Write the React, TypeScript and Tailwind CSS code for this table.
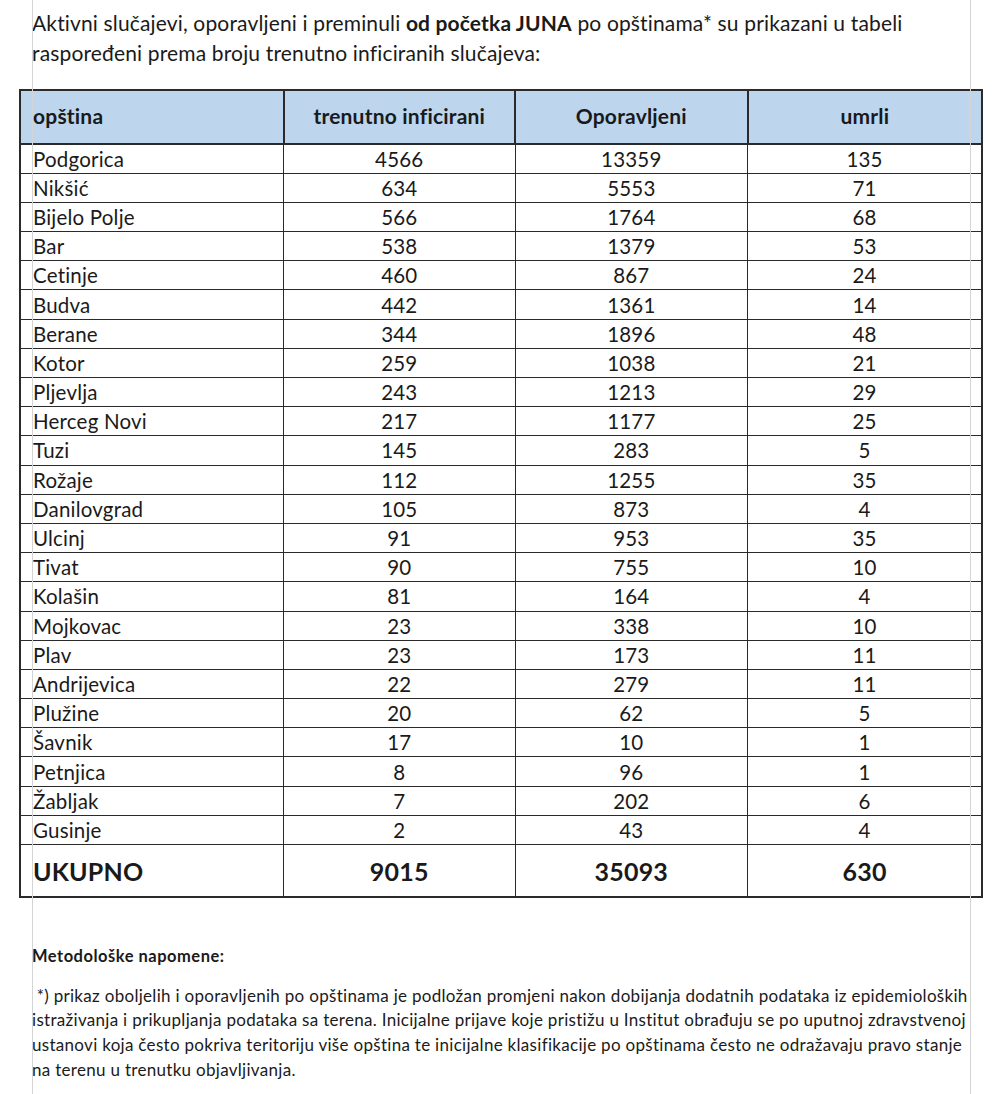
import React from "react";

const rows: [string, number, number, number][] = [
  ["Podgorica", 4566, 13359, 135],
  ["Nikšić", 634, 5553, 71],
  ["Bijelo Polje", 566, 1764, 68],
  ["Bar", 538, 1379, 53],
  ["Cetinje", 460, 867, 24],
  ["Budva", 442, 1361, 14],
  ["Berane", 344, 1896, 48],
  ["Kotor", 259, 1038, 21],
  ["Pljevlja", 243, 1213, 29],
  ["Herceg Novi", 217, 1177, 25],
  ["Tuzi", 145, 283, 5],
  ["Rožaje", 112, 1255, 35],
  ["Danilovgrad", 105, 873, 4],
  ["Ulcinj", 91, 953, 35],
  ["Tivat", 90, 755, 10],
  ["Kolašin", 81, 164, 4],
  ["Mojkovac", 23, 338, 10],
  ["Plav", 23, 173, 11],
  ["Andrijevica", 22, 279, 11],
  ["Plužine", 20, 62, 5],
  ["Šavnik", 17, 10, 1],
  ["Petnjica", 8, 96, 1],
  ["Žabljak", 7, 202, 6],
  ["Gusinje", 2, 43, 4],
];

export default function App() {
  return (
    <div className="relative w-[1000px] h-[1094px] bg-white text-black font-['Lato','Open_Sans',sans-serif] overflow-hidden">
      {/* margin guides of the document */}
      <div className="absolute left-[32px] top-0 h-full w-px bg-[#d4d4d4] z-10" />
      <div className="absolute left-[970px] top-0 h-full w-px bg-[#d4d4d4] z-10" />

      <div className="pl-[32px] pt-[8px] text-[21px] leading-[30px] tracking-[0.15px] text-[#1a1a1a] whitespace-nowrap">
        <p>
          Aktivni slučajevi, oporavljeni i preminuli <b>od početka JUNA</b> po opštinama* su prikazani u tabeli
        </p>
        <p>raspoređeni prema broju trenutno inficiranih slučajeva:</p>
      </div>

      <table className="ml-[19px] mt-[21px] w-[964px] border-collapse border-2 border-[#2a2a2a] text-[20.5px] tracking-[0.2px] text-[#1a1a1a]">
        <colgroup>
          <col className="w-[264px]" />
          <col className="w-[232px]" />
          <col className="w-[233px]" />
          <col className="w-[235px]" />
        </colgroup>
        <thead>
          <tr className="bg-[#bdd6ee] h-[54px] text-[21px] font-bold">
            <th className="border-2 border-[#2a2a2a] text-left pl-[12px] pb-[3px]">opština</th>
            <th className="border-2 border-[#2a2a2a] text-center pb-[3px]">trenutno inficirani</th>
            <th className="border-2 border-[#2a2a2a] text-center pb-[3px]">Oporavljeni</th>
            <th className="border-2 border-[#2a2a2a] text-center pb-[3px]">umrli</th>
          </tr>
        </thead>
        <tbody>
          {rows.map(([name, inf, rec, dead]) => (
            <tr key={name} className="h-[29.2px] leading-[26px]">
              <td className="border border-[#2a2a2a] pl-[12px] py-0">{name}</td>
              <td className="border border-[#2a2a2a] text-center py-0">{inf}</td>
              <td className="border border-[#2a2a2a] text-center py-0">{rec}</td>
              <td className="border border-[#2a2a2a] text-center py-0">{dead}</td>
            </tr>
          ))}
          <tr className="h-[52px] text-[25px] font-bold">
            <td className="border border-[#2a2a2a] pl-[12px] pt-[3px]">UKUPNO</td>
            <td className="border border-[#2a2a2a] text-center pt-[3px]">9015</td>
            <td className="border border-[#2a2a2a] text-center pt-[3px]">35093</td>
            <td className="border border-[#2a2a2a] text-center pt-[3px]">630</td>
          </tr>
        </tbody>
      </table>

      <div className="pl-[32px] text-[#1a1a1a] whitespace-nowrap">
        <p className="mt-[46px] text-[16.5px] font-bold leading-[24px] tracking-[0.5px]">Metodološke napomene:</p>
        <p className="mt-[16px] text-[17px] leading-[24.7px] tracking-[0.3px]">
          &nbsp;*) prikaz oboljelih i oporavljenih po opštinama je podložan promjeni nakon dobijanja dodatnih podataka iz epidemioloških
          <br />
          istraživanja i prikupljanja podataka sa terena. Inicijalne prijave koje pristižu u Institut obrađuju se po uputnoj zdravstvenoj
          <br />
          ustanovi koja često pokriva teritoriju više opština te inicijalne klasifikacije po opštinama često ne odražavaju pravo stanje
          <br />
          na terenu u trenutku objavljivanja.
        </p>
      </div>
    </div>
  );
}
